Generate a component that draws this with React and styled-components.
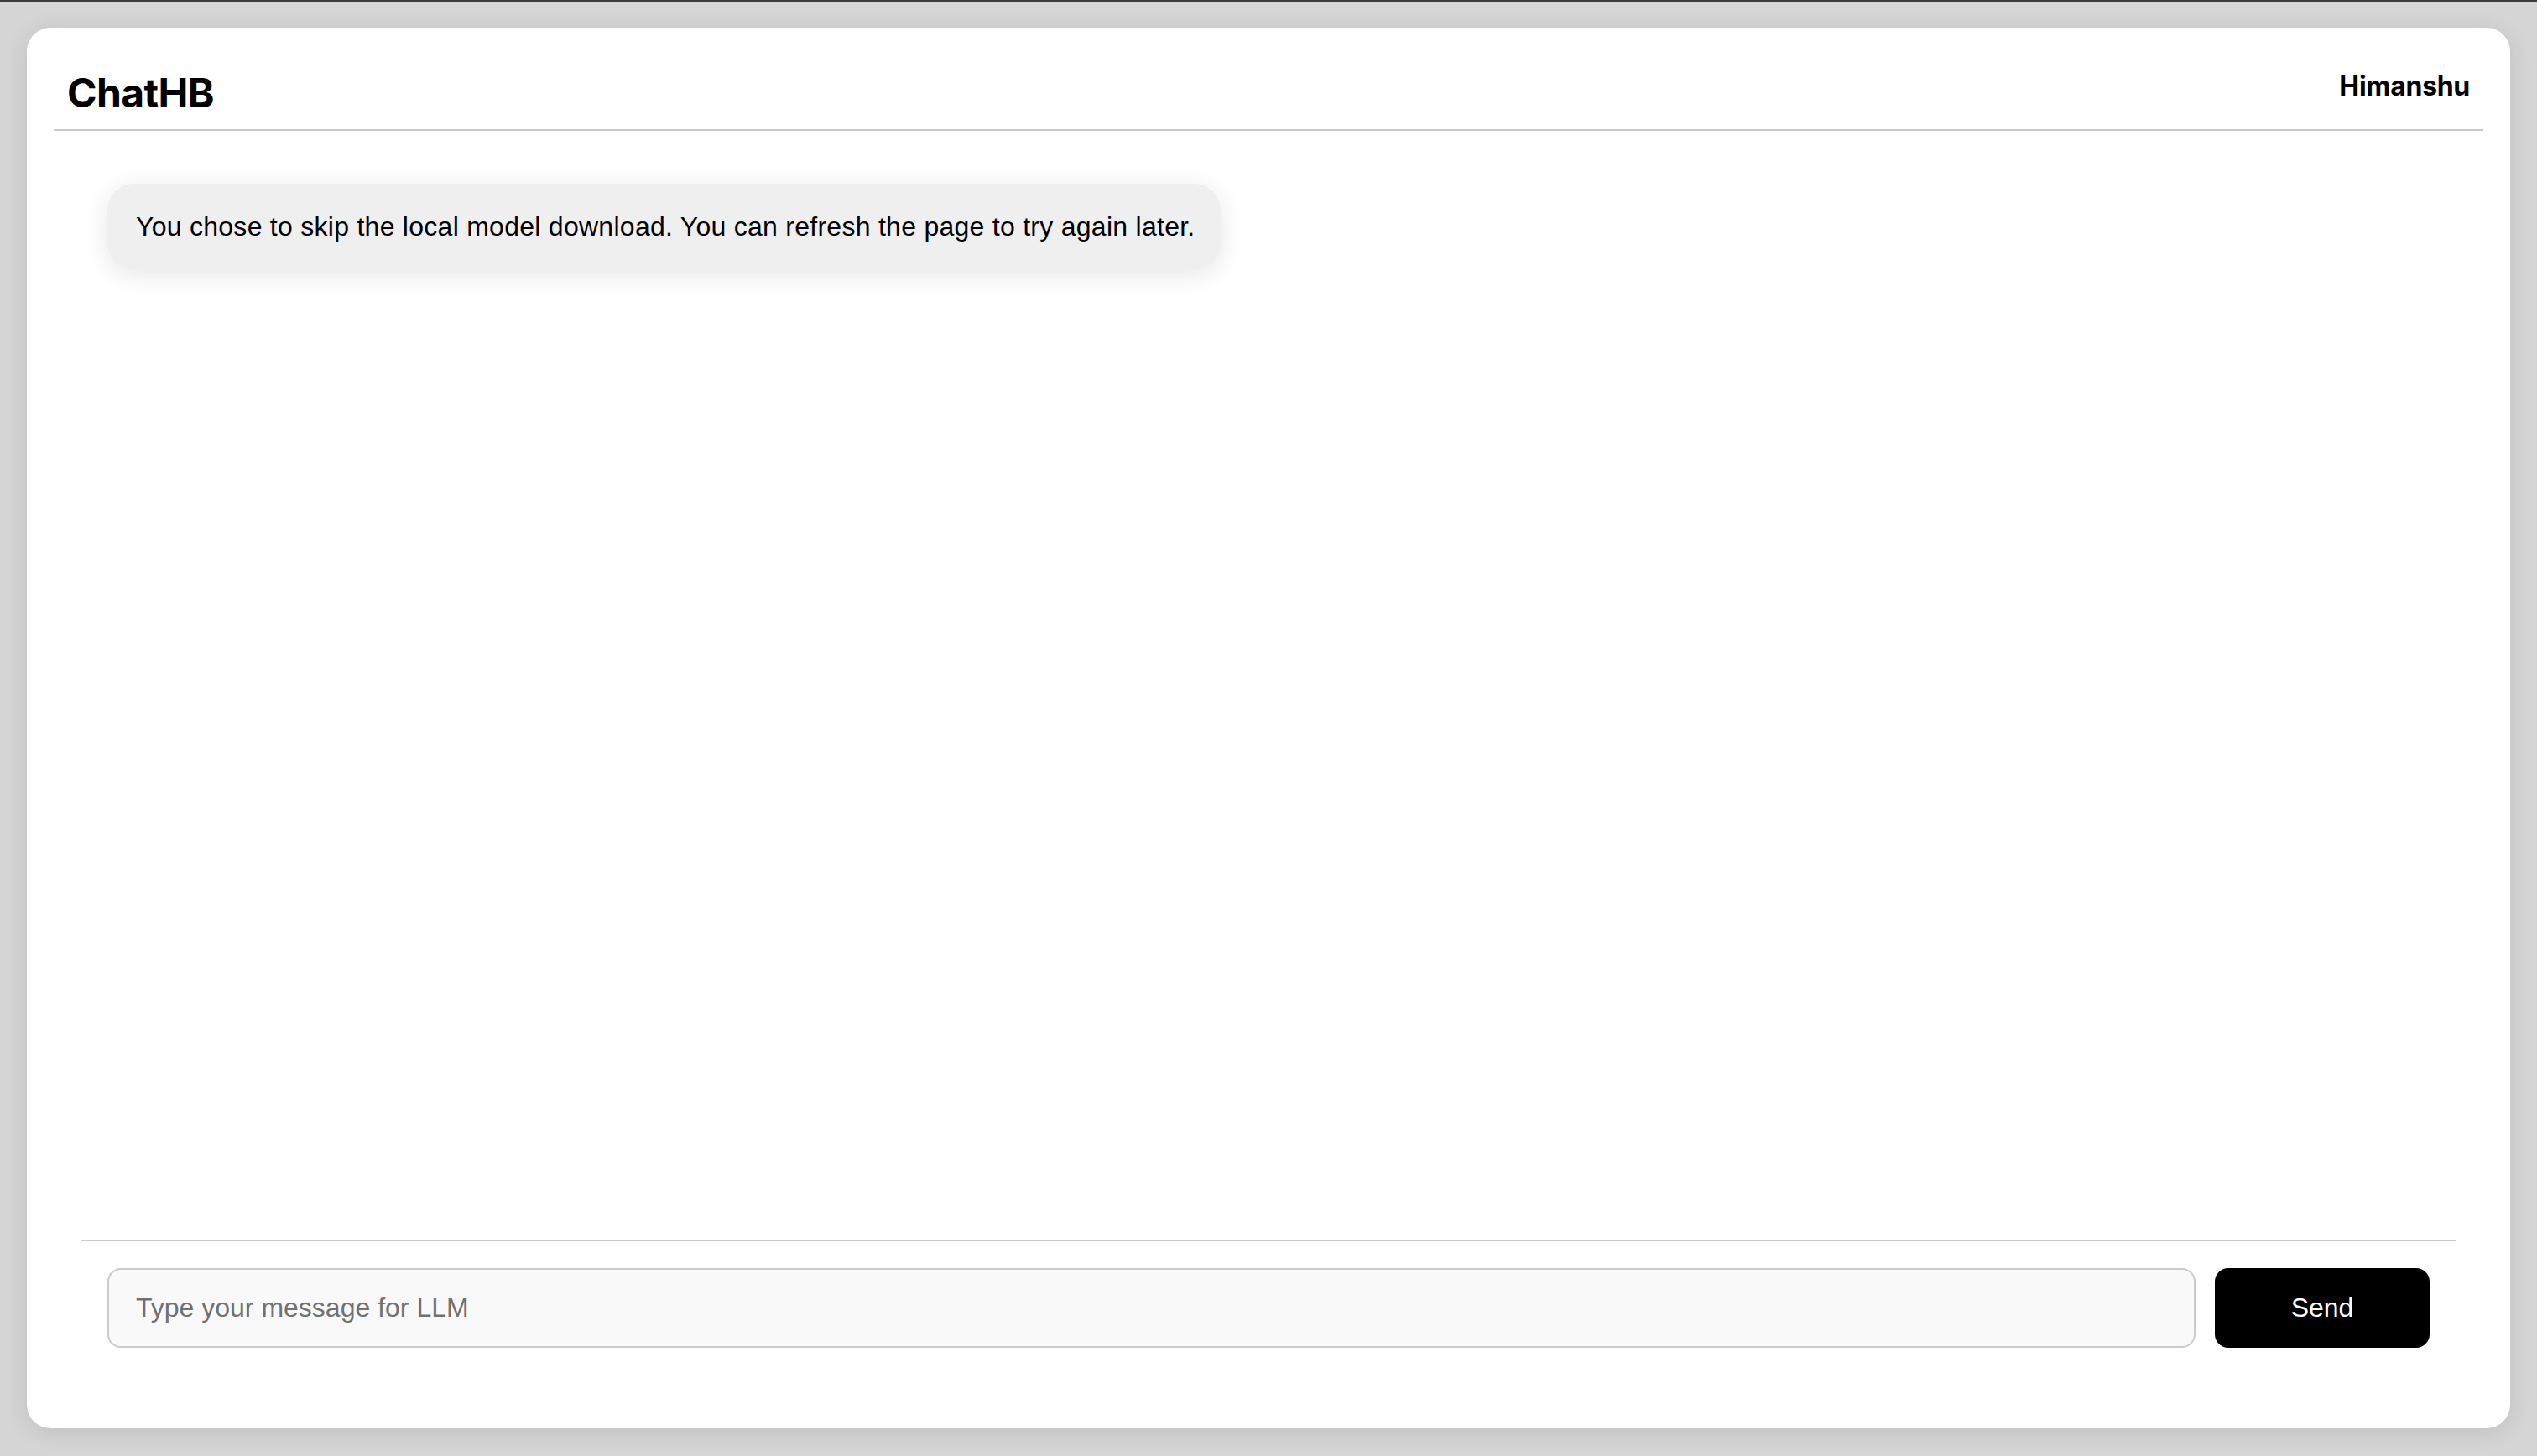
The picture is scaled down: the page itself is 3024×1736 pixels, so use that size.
import React, { useState } from 'react';
import styled, { createGlobalStyle } from 'styled-components';

const GlobalStyle = createGlobalStyle`
    html, body {
        margin: 0;
        padding: 0;
        background: #d5d5d5;
        overflow: hidden;
    }
    body {
        border-top: 2px solid #3a3a3a;
        font-family: "Liberation Sans", Arial, sans-serif;
        color: #000;
    }
    * {
        box-sizing: border-box;
    }
`;

const Page = styled.div`
    height: calc(100vh - 2px);
    padding: 31px 32px 33px;
    display: flex;
`;

const Card = styled.div`
    flex: 1;
    display: flex;
    flex-direction: column;
    background: #fff;
    border-radius: 28px;
    padding: 0 32px 64px;
    box-shadow: 0 4px 28px rgba(0, 0, 0, 0.1);
`;

const Header = styled.header`
    height: 123px;
    padding: 54px 16px 0;
    display: flex;
    justify-content: space-between;
    align-items: flex-start;
    border-bottom: 2px solid #c9c9c9;
`;

const Brand = styled.h1`
    margin: 0;
    font-family: Inter, "Liberation Sans", sans-serif;
    font-size: 48px;
    line-height: 48px;
    font-weight: 700;
    letter-spacing: -0.6px;
`;

const UserName = styled.span`
    font-family: Inter, "Liberation Sans", sans-serif;
    font-size: 32px;
    line-height: 32px;
    font-weight: 700;
    letter-spacing: -0.3px;
`;

const ChatPane = styled.main`
    flex: 1;
    margin: 0 32px;
    display: flex;
    flex-direction: column;
    min-height: 0;
`;

const MessageList = styled.div`
    flex: 1;
    padding: 63px 32px 0;
    display: flex;
    flex-direction: column;
    align-items: ${props => (props.align === 'right' ? 'flex-end' : 'flex-start')};
    gap: 24px;
    overflow-y: auto;
`;

const Bubble = styled.div`
    background: ${props => (props.from === 'user' ? '#000' : '#efefef')};
    color: ${props => (props.from === 'user' ? '#fff' : '#000')};
    border-radius: 32px;
    padding: 32px 30px 32px 34px;
    font-size: 32px;
    line-height: 38px;
    letter-spacing: 0.27px;
    box-shadow: 0 6px 30px rgba(0, 0, 0, 0.1);
`;

const Composer = styled.form`
    display: flex;
    gap: 23px;
    padding: 32px 32px 32px;
    border-top: 2px solid #c9c9c9;
`;

const Input = styled.input`
    flex: 1;
    height: 95px;
    padding: 0 32px;
    border: 2px solid #cbcbcb;
    border-radius: 16px;
    background: #f9f9f9;
    font-family: "Liberation Sans", Arial, sans-serif;
    font-size: 32px;
    color: #000;
    outline: none;

    &::placeholder {
        color: #717171;
    }
`;

const SendButton = styled.button`
    width: 256px;
    height: 95px;
    border: none;
    border-radius: 16px;
    background: #000;
    color: #fff;
    font-family: "Liberation Sans", Arial, sans-serif;
    font-size: 32px;
    cursor: pointer;
`;

export default function App() {
    const [messages, setMessages] = useState([
        {
            id: 1,
            from: 'system',
            text: 'You chose to skip the local model download. You can refresh the page to try again later.',
        },
    ]);
    const [draft, setDraft] = useState('');

    const handleSubmit = (e) => {
        e.preventDefault();
        if (!draft.trim()) return;
        setMessages([...messages, { id: Date.now(), from: 'user', text: draft }]);
        setDraft('');
    };

    return (
        <>
            <GlobalStyle />
            <Page>
                <Card>
                    <Header>
                        <Brand>ChatHB</Brand>
                        <UserName>Himanshu</UserName>
                    </Header>
                    <ChatPane>
                        <MessageList>
                            {messages.map((m) => (
                                <Bubble key={m.id} from={m.from}>{m.text}</Bubble>
                            ))}
                        </MessageList>
                        <Composer onSubmit={handleSubmit}>
                            <Input
                                placeholder="Type your message for LLM"
                                value={draft}
                                onChange={(e) => setDraft(e.target.value)}
                            />
                            <SendButton type="submit">Send</SendButton>
                        </Composer>
                    </ChatPane>
                </Card>
            </Page>
        </>
    );
}
